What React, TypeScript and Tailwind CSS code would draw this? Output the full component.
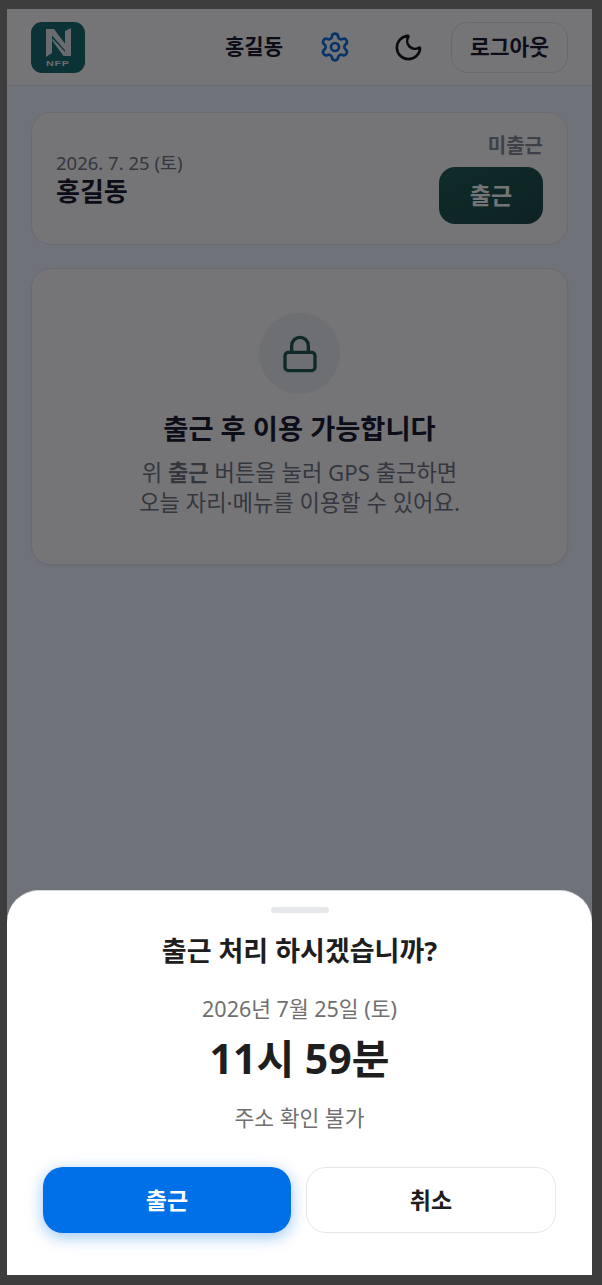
import { Settings, Moon, Lock } from "lucide-react";

function Logo() {
  return (
    <div className="flex h-[51px] w-[54px] flex-col items-center rounded-[11px] bg-[#146a6a]">
      <svg viewBox="0 0 25 29" className="mt-[6px] h-[29px] w-[25px]" fill="#e6e9e9">
        <path d="M0 1 H8 L20 17 V23.5 L6 7.5 V25 L0 29 Z" />
        <path d="M19 3 L25 0 V28 H17.5 L6.5 13 V10.5 L19 24 Z" />
      </svg>
      <span className="mt-[3px] scale-x-[1.35] text-[8px] leading-[8px] font-bold tracking-[0.5px] text-[#e6e9e9] font-['Liberation_Sans',sans-serif]">NFP</span>
    </div>
  );
}

function TopBar() {
  return (
    <header className="flex h-[77px] items-center border-b border-[#e2e5ec] bg-white pl-[24px] pr-[24px]">
      <Logo />
      <span className="ml-[140px] text-[21px] font-bold text-[#1a1a2e]">홍길동</span>
      <Settings className="ml-[36px] size-[32px] text-[#0a6fdc]" strokeWidth={2} />
      <Moon className="ml-[42px] size-[31px] text-[#111118]" strokeWidth={2} />
      <button className="ml-[27px] h-[51px] w-[117px] rounded-[16px] border border-[#e2e5ec] text-[21.5px] font-semibold text-[#1a1a2e]">
        로그아웃
      </button>
    </header>
  );
}

function StatusCard() {
  return (
    <section className="flex h-[133px] items-center justify-between rounded-[20px] border border-[#e7e9ee] bg-white pl-[24px] pr-[24px]">
      <div className="flex flex-col">
        <span className="text-[18.5px] leading-[24px] text-[#72757f]">2026. 7. 25 (토)</span>
        <span className="mt-[1px] text-[26px] leading-[30px] font-bold text-[#1a1a2e]">홍길동</span>
      </div>
      <div className="flex flex-col items-end gap-[9px]">
        <span className="text-[20px] leading-[24px] font-bold text-[#8a8c95]">미출근</span>
        <button className="h-[57px] w-[104px] rounded-[16px] bg-gradient-to-br from-[#1d5c50] to-[#1a4a43] text-[23px] font-bold text-white">
          출근
        </button>
      </div>
    </section>
  );
}

function LockedCard() {
  return (
    <section className="flex h-[297px] flex-col items-center rounded-[20px] border border-[#e7e9ee] bg-white pt-[44px] shadow-[0_1px_3px_rgba(0,0,0,0.05)]">
      <div className="flex size-[81px] items-center justify-center rounded-full bg-[#eff1f4]">
        <Lock className="size-[40px] text-[#1d5a50]" strokeWidth={2} />
      </div>
      <h2 className="mt-[19px] text-[27.3px] leading-[32px] font-bold text-[#1a1a2e]">출근 후 이용 가능합니다</h2>
      <p className="mt-[13px] text-center text-[22.2px] leading-[30px] text-[#72757f]">
        위 <strong className="font-bold">출근</strong> 버튼을 눌러 GPS 출근하면
        <br />
        오늘 자리·메뉴를 이용할 수 있어요.
      </p>
    </section>
  );
}

function Sheet() {
  return (
    <div className="absolute inset-x-0 bottom-0 flex h-[385px] flex-col items-center rounded-t-[32px] border-t border-[#d8dae0] bg-white">
      <div className="mt-[16px] h-[6px] w-[58px] rounded-full bg-[#e5e7eb]" />
      <h3 className="mt-[22px] text-[27px] leading-[32px] font-bold text-[#1e1e1e]">출근 처리 하시겠습니까?</h3>
      <p className="mt-[28px] text-[21.5px] leading-[28px] text-[#707070]">2026년 7월 25일 (토)</p>
      <p className="mt-[9px] text-[41px] leading-[52px] font-bold text-[#1e1e1e]">11시 59분</p>
      <p className="mt-[20px] text-[21.5px] leading-[28px] text-[#707070]">주소 확인 불가</p>
      <div className="mt-[35px] flex w-full gap-[15px] pl-[36px] pr-[36px]">
        <button className="h-[66px] w-[248px] rounded-[20px] bg-[#0070e8] text-[23px] font-bold text-white shadow-[0_4px_16px_rgba(0,112,232,0.4)]">
          출근
        </button>
        <button className="h-[66px] w-[250px] rounded-[20px] border border-[#e5e7eb] bg-white text-[23px] font-bold text-[#1e1e1e]">
          취소
        </button>
      </div>
    </div>
  );
}

export default function App() {
  return (
    <div className="h-[1285px] w-[602px] bg-[#3d3d3d] pt-[9px] pr-[10px] pb-[10px] pl-[7px] font-['Noto_Sans','Noto_Sans_CJK_KR',sans-serif]">
      <div className="relative h-[1266px] w-[585px] overflow-hidden bg-[#f2f8ff]">
        <TopBar />
        <main className="flex flex-col gap-[23px] pt-[26px] pr-[24px] pl-[24px]">
          <StatusCard />
          <LockedCard />
        </main>
        <div className="absolute inset-0 bg-[rgba(4,4,10,0.55)]" />
        <Sheet />
      </div>
    </div>
  );
}
